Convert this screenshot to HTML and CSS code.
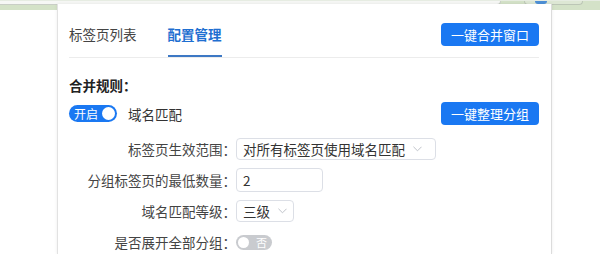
FILE: index.html
```html
<!DOCTYPE html>
<html lang="zh-CN">

<head>
  <meta charset="UTF-8" />
  <meta name="viewport" content="width=device-width, initial-scale=1.0" />
  <title>标签页管理</title>
  <link rel="stylesheet" href="styles.css">
</head>

<body>
  <!-- 浏览器工具栏 -->
  <div class="toolbar">
    <div class="omnibox"></div>
    <div class="ext-pill"><span class="ext-dot"></span></div>
  </div>

  <!-- 插件弹窗 -->
  <div class="popup">
    <div class="tabs">
      <div class="tab">标签页列表</div>
      <div class="tab active">配置管理</div>
      <button class="btn">一键合并窗口</button>
    </div>

    <div class="section-title">合并规则：</div>

    <div class="rule-row">
      <div class="rule-left">
        <span class="switch on"><span class="switch-text">开启</span><span class="knob"></span></span>
        <span class="rule-name">域名匹配</span>
      </div>
      <button class="btn">一键整理分组</button>
    </div>

    <div class="form">
      <div class="form-row">
        <label class="form-label">标签页生效范围：</label>
        <div class="field select wide">
          <span>对所有标签页使用域名匹配</span>
          <svg class="chevron" viewBox="0 0 10 6"><polyline points="0.5,0.5 5,5 9.5,0.5" /></svg>
        </div>
      </div>
      <div class="form-row">
        <label class="form-label">分组标签页的最低数量：</label>
        <div class="field input">2</div>
      </div>
      <div class="form-row">
        <label class="form-label">域名匹配等级：</label>
        <div class="field select">
          <span>三级</span>
          <svg class="chevron" viewBox="0 0 10 6"><polyline points="0.5,0.5 5,5 9.5,0.5" /></svg>
        </div>
      </div>
      <div class="form-row">
        <label class="form-label">是否展开全部分组：</label>
        <span class="switch off"><span class="knob"></span><span class="switch-text">否</span></span>
      </div>
    </div>
  </div>
</body>

</html>
```

FILE: styles.css
```css
body {
  margin: 0;
  background: #fff;
  font-family: "Noto Sans CJK SC", "Noto Sans", sans-serif;
  color: #333;
  overflow: hidden;
}

.toolbar {
  display: flex;
  height: 10px;
  background: #d4e2c8;
  border-top: 1px solid #e6ece2;
  box-sizing: border-box;
}

.omnibox {
  width: 500px;
  height: 3px;
  background: #f6f7f5;
  border-bottom: 1px solid #c9cec6;
  border-right: 1px solid #c9cec6;
  border-bottom-right-radius: 8px;
}

.ext-pill {
  margin-left: 23px;
  width: 57px;
  height: 3px;
  border: 1px solid #bcc6b6;
  border-top: none;
  border-radius: 0 0 10px 10px;
  background: #dde7d4;
  position: relative;
}

.ext-dot {
  position: absolute;
  left: 10px;
  top: 0;
  width: 12px;
  height: 3px;
  border-radius: 0 0 6px 6px;
  background: #4d8fd6;
}

/* 弹窗 */
.popup {
  position: absolute;
  left: 57px;
  top: 4px;
  bottom: 0;
  width: 495px;
  box-sizing: border-box;
  padding: 0 12px 0 11px;
  background: #fff;
  border-left: 1px solid #e2e2e2;
  border-right: 1px solid #dcdcdc;
  box-shadow: 0 0 3px rgba(0, 0, 0, 0.08);
}

.tabs {
  display: flex;
  align-items: flex-start;
  padding-top: 19px;
  border-bottom: 1px solid #ececec;
}

.tab {
  font-size: 13.5px;
  line-height: 23px;
  padding-bottom: 9px;
  border-bottom: 2px solid transparent;
  margin-right: 31px;
  color: #444;
}

.tab.active {
  color: #1f6fd1;
  font-weight: bold;
  border-bottom-color: #3d78c4;
}

.btn {
  margin-left: auto;
  height: 23px;
  padding: 0 10px;
  border: none;
  border-radius: 4px;
  background: #1a78f2;
  color: #fff;
  font-family: inherit;
  font-size: 13px;
  line-height: 23px;
  width: 98px;
}

.section-title {
  margin-top: 17px;
  font-size: 13.5px;
  line-height: 20px;
  font-weight: bold;
  color: #222;
}

.rule-row {
  display: flex;
  align-items: center;
  margin-top: 7px;
}

.rule-left {
  display: flex;
  align-items: center;
}

.rule-name {
  margin-left: 11px;
  font-size: 13.5px;
  color: #333;
}

.switch {
  display: inline-flex;
  align-items: center;
  box-sizing: border-box;
  border-radius: 9px;
  color: #fff;
}

.switch.on {
  width: 48px;
  height: 17px;
  padding: 0 2px 0 5px;
  background: #1a78f2;
  justify-content: space-between;
}

.switch.on .switch-text {
  font-size: 12px;
  line-height: 17px;
}

.switch.on .knob {
  width: 13px;
  height: 13px;
}

.switch.off {
  width: 36px;
  height: 15px;
  padding: 0 5px 0 2px;
  background: #c9cbcf;
  justify-content: space-between;
}

.switch.off .switch-text {
  font-size: 11px;
  line-height: 15px;
}

.switch.off .knob {
  width: 11px;
  height: 11px;
}

.knob {
  border-radius: 50%;
  background: #fff;
}

.form {
  margin-top: 13px;
  display: flex;
  flex-direction: column;
  gap: 9px;
}

.form-row {
  display: flex;
  align-items: center;
  height: 22px;
}

.form-label {
  width: 167px;
  text-align: right;
  font-size: 13.5px;
  color: #444;
}

.field {
  box-sizing: border-box;
  height: 22px;
  border: 1px solid #dcdfe6;
  border-radius: 4px;
  padding: 0 6px;
  font-size: 13.5px;
  line-height: 20px;
  color: #333;
  display: flex;
  align-items: center;
}

.field.input {
  width: 87px;
  height: 24px;
}

.select {
  gap: 8px;
}

.select.wide {
  width: 200px;
}

.chevron {
  width: 9px;
  height: 6px;
  fill: none;
  stroke: #b8bcc4;
  stroke-width: 1;
}
```
